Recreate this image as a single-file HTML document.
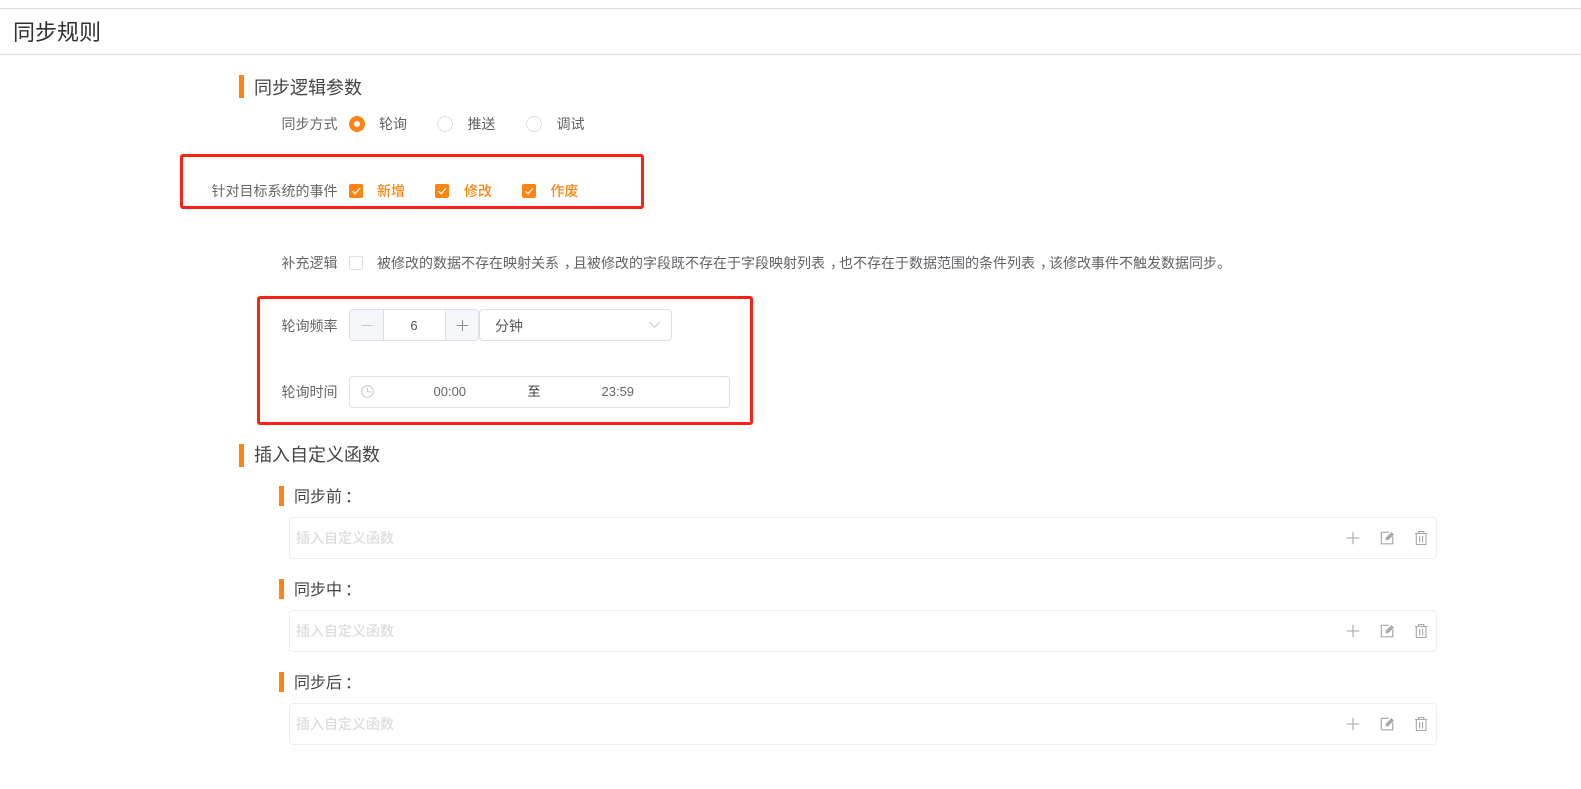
<!DOCTYPE html>
<html lang="zh">
<head>
<meta charset="utf-8">
<title>同步规则</title>
<style>
html,body{margin:0;padding:0;background:#fff;}
body{position:relative;width:1581px;height:789px;overflow:hidden;font-family:"Liberation Sans","Noto Sans CJK SC",sans-serif;color:#606266;font-size:14px;}
.a{position:absolute;}
.t{position:absolute;white-space:nowrap;line-height:20px;height:20px;font-size:14px;}
.line{position:absolute;left:0;width:1581px;height:1px;background:#dcdcdc;}
.bar{position:absolute;background:#fb8412;width:5px;}
.h{position:absolute;white-space:nowrap;font-size:18px;line-height:24px;color:#444;}
.h2{position:absolute;white-space:nowrap;font-size:16px;line-height:20px;color:#444;}
.lab{text-align:right;width:140px;left:197.500px;color:#666;}
.radio{position:absolute;width:14px;height:14px;border-radius:50%;border:1px solid #dcdfe6;background:#fff;box-sizing:content-box;}
.radio.on{width:6px;height:6px;border:5px solid #fb8412;}
.cb{position:absolute;width:14px;height:14px;border-radius:2px;background:#fb8412;}
.cb.off{background:#fff;border:1px solid #dcdfe6;width:12px;height:12px;}
.or{color:#fb8412;font-weight:500;}
.c{position:relative;left:5px;}
.d{position:relative;left:3px;}
.red{position:absolute;border:3px solid #ff2015;border-radius:3px;box-sizing:border-box;}
.box{position:absolute;left:289px;width:1148px;height:42px;border:1px solid #edeef4;border-radius:4px;box-sizing:border-box;}
.ph{position:absolute;left:296px;white-space:nowrap;font-size:14px;line-height:20px;color:#dcdcdc;font-weight:500;}
svg{position:absolute;overflow:visible;}
</style>
</head>
<body>
<div class="line" style="top:8px"></div>
<div class="line" style="top:54px"></div>
<div class="a" style="left:13px;top:17px;font-size:22px;line-height:31px;color:#303133;white-space:nowrap">同步规则</div>

<div class="bar" style="left:239px;top:75px;height:23px"></div>
<div class="h" style="left:254px;top:76px">同步逻辑参数</div>

<div class="t lab" style="top:114px">同步方式</div>
<div class="radio on" style="left:349px;top:116px"></div>
<div class="t" style="left:379px;top:114px">轮询</div>
<div class="radio" style="left:437px;top:116px"></div>
<div class="t" style="left:467.500px;top:114px">推送</div>
<div class="radio" style="left:526px;top:116px"></div>
<div class="t" style="left:556.500px;top:114px">调试</div>

<div class="red" style="left:180px;top:154px;width:464px;height:55px"></div>
<div class="t lab" style="top:181px">针对目标系统的事件</div>
<div class="cb" style="left:349px;top:184px"><svg width="14" height="14" style="left:0;top:0"><path d="M3.500 7.200L6 9.700L11 4.300" fill="none" stroke="#fff" stroke-width="1.200"/></svg></div>
<div class="t or" style="left:377px;top:181px">新增</div>
<div class="cb" style="left:435px;top:184px"><svg width="14" height="14" style="left:0;top:0"><path d="M3.500 7.200L6 9.700L11 4.300" fill="none" stroke="#fff" stroke-width="1.200"/></svg></div>
<div class="t or" style="left:464px;top:181px">修改</div>
<div class="cb" style="left:522px;top:184px"><svg width="14" height="14" style="left:0;top:0"><path d="M3.500 7.200L6 9.700L11 4.300" fill="none" stroke="#fff" stroke-width="1.200"/></svg></div>
<div class="t or" style="left:550.500px;top:181px">作废</div>

<div class="t lab" style="top:253px">补充逻辑</div>
<div class="cb off" style="left:349px;top:256px"></div>
<div class="t" style="left:377px;top:253px">被修改的数据不存在映射关系<span class="c">，</span>且被修改的字段既不存在于字段映射列表<span class="c">，</span>也不存在于数据范围的条件列表<span class="c">，</span>该修改事件不触发数据同步。</div>

<div class="red" style="left:257px;top:296px;width:496px;height:129px"></div>
<div class="t lab" style="top:316px">轮询频率</div>
<div class="a" style="left:349px;top:309px;width:130px;height:32px;border:1px solid #dcdfe6;border-radius:4px;box-sizing:border-box;background:#fff;overflow:hidden">
  <div class="a" style="left:0;top:0;width:33px;height:30px;background:#f5f7fa;border-right:1px solid #dcdfe6"></div>
  <div class="a" style="right:0;top:0;width:32px;height:30px;background:#f5f7fa;border-left:1px solid #dcdfe6"></div>
</div>
<svg width="130" height="32" style="left:349px;top:309px"><path d="M12.500 16.500H23.500" stroke="#c8cacf" stroke-width="1"/><path d="M108 16.500H119M113.500 11V22" stroke="#8a8d93" stroke-width="1" fill="none"/></svg>
<div class="t" style="left:383px;top:316px;width:62px;text-align:center;font-size:13px;color:#555">6</div>
<div class="a" style="left:479px;top:309px;width:193px;height:32px;border:1px solid #dcdfe6;border-radius:4px;box-sizing:border-box"></div>
<div class="t" style="left:495px;top:316px;color:#555">分钟</div>
<svg width="12" height="7" style="left:649px;top:321px"><path d="M.5 1L5.500 6.300L10.500 1" fill="none" stroke="#c0c4cc" stroke-width="1"/></svg>

<div class="t lab" style="top:382px">轮询时间</div>
<div class="a" style="left:349px;top:376px;width:381px;height:32px;border:1px solid #dcdfe6;border-radius:4px;box-sizing:border-box"></div>
<svg width="14" height="14" style="left:361px;top:385px"><circle cx="6.500" cy="6.500" r="5.800" fill="none" stroke="#c8cbd2" stroke-width="1.100"/><path d="M6.500 3V6.800H10" fill="none" stroke="#c8cbd2" stroke-width="1.100"/></svg>
<div class="t" style="left:433.500px;top:382px;font-size:13px;color:#666">00:00</div>
<div class="t" style="left:527.500px;top:382px;font-size:13px;color:#303133">至</div>
<div class="t" style="left:601.500px;top:382px;font-size:13px;color:#666">23:59</div>

<div class="bar" style="left:239px;top:444px;height:23px"></div>
<div class="h" style="left:254px;top:443px">插入自定义函数</div>

<div class="bar" style="left:279px;top:486px;height:20px"></div>
<div class="h2" style="left:294px;top:488px">同步前<span class="d">：</span></div>
<div class="box" style="top:517px"></div>
<div class="ph" style="top:528px">插入自定义函数</div>
<svg width="95" height="26" style="left:1340px;top:525px"><path d="M6.700 13H19.300M13 6.700V19.300" stroke="#b4b4b4" stroke-width="1.300" fill="none"/><path d="M49 7.300H41.300V18.800H52.800V11.500" stroke="#a8a8a8" stroke-width="1.200" fill="none"/><path d="M45.500 15.500L46 12.500L51.500 7L54 9.500L48.500 15Z" fill="#a8a8a8"/><path d="M75 8.500H87.300M78.500 8.500V6.500H83.800V8.500M76.300 8.500V19.500H86V8.500M79.700 11V17.500M82.600 11V17.500" stroke="#a8a8a8" stroke-width="1.100" fill="none"/></svg>

<div class="bar" style="left:279px;top:579px;height:20px"></div>
<div class="h2" style="left:294px;top:581px">同步中<span class="d">：</span></div>
<div class="box" style="top:610px"></div>
<div class="ph" style="top:621px">插入自定义函数</div>
<svg width="95" height="26" style="left:1340px;top:618px"><path d="M6.700 13H19.300M13 6.700V19.300" stroke="#b4b4b4" stroke-width="1.300" fill="none"/><path d="M49 7.300H41.300V18.800H52.800V11.500" stroke="#a8a8a8" stroke-width="1.200" fill="none"/><path d="M45.500 15.500L46 12.500L51.500 7L54 9.500L48.500 15Z" fill="#a8a8a8"/><path d="M75 8.500H87.300M78.500 8.500V6.500H83.800V8.500M76.300 8.500V19.500H86V8.500M79.700 11V17.500M82.600 11V17.500" stroke="#a8a8a8" stroke-width="1.100" fill="none"/></svg>

<div class="bar" style="left:279px;top:672px;height:20px"></div>
<div class="h2" style="left:294px;top:674px">同步后<span class="d">：</span></div>
<div class="box" style="top:703px"></div>
<div class="ph" style="top:714px">插入自定义函数</div>
<svg width="95" height="26" style="left:1340px;top:711px"><path d="M6.700 13H19.300M13 6.700V19.300" stroke="#b4b4b4" stroke-width="1.300" fill="none"/><path d="M49 7.300H41.300V18.800H52.800V11.500" stroke="#a8a8a8" stroke-width="1.200" fill="none"/><path d="M45.500 15.500L46 12.500L51.500 7L54 9.500L48.500 15Z" fill="#a8a8a8"/><path d="M75 8.500H87.300M78.500 8.500V6.500H83.800V8.500M76.300 8.500V19.500H86V8.500M79.700 11V17.500M82.600 11V17.500" stroke="#a8a8a8" stroke-width="1.100" fill="none"/></svg>
</body>
</html>
